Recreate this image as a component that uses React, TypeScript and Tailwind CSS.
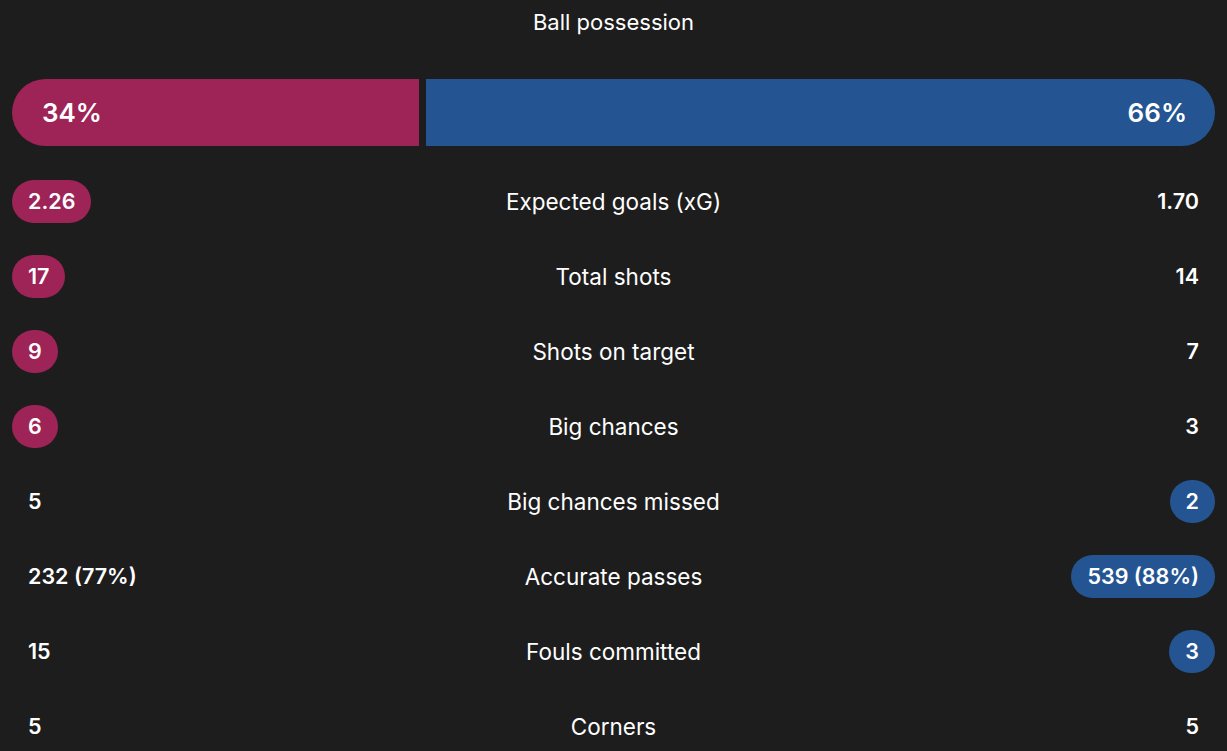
import React from 'react';

type Side = 'home' | 'away' | null;

interface StatRow {
  label: string;
  home: string;
  away: string;
  highlight: Side;
}

const stats: StatRow[] = [
  { label: 'Expected goals (xG)', home: '2.26', away: '1.70', highlight: 'home' },
  { label: 'Total shots', home: '17', away: '14', highlight: 'home' },
  { label: 'Shots on target', home: '9', away: '7', highlight: 'home' },
  { label: 'Big chances', home: '6', away: '3', highlight: 'home' },
  { label: 'Big chances missed', home: '5', away: '2', highlight: 'away' },
  { label: 'Accurate passes', home: '232 (77%)', away: '539 (88%)', highlight: 'away' },
  { label: 'Fouls committed', home: '15', away: '3', highlight: 'away' },
  { label: 'Corners', home: '5', away: '5', highlight: null },
];

const Value = ({ value, active, side }: { value: string; active: boolean; side: 'home' | 'away' }) => {
  const bg = side === 'home' ? 'bg-[#9e2356]' : 'bg-[#245592]';
  return (
    <span
      className={`inline-flex h-[43px] min-w-[43px] items-center justify-center rounded-full px-[16px] text-[21.5px] font-semibold text-white ${
        active ? bg : ''
      }`}
    >
      {value}
    </span>
  );
};

export default function App() {
  const home = 34;
  return (
    <div className="min-h-[751px] w-full bg-[#1d1d1d] px-[12px] text-white" style={{ fontFamily: 'Inter, "Noto Sans", sans-serif' }}>
      <div className="flex h-[44px] items-center justify-center text-[22px]">Ball possession</div>

      <div className="mt-[35px] flex h-[67px] gap-[7px]">
        <div
          className="flex items-center rounded-l-full bg-[#9e2356] pl-[30px] text-[26px] font-semibold"
          style={{ width: `calc((100% - 7px) * ${home / 100})` }}
        >
          {home}%
        </div>
        <div className="flex flex-1 items-center justify-end rounded-r-full bg-[#245592] pr-[28px] text-[26px] font-semibold">
          {100 - home}%
        </div>
      </div>

      <div className="mt-[18px]">
        {stats.map(s => (
          <div key={s.label} className="grid h-[75px] grid-cols-[1fr_auto_1fr] items-center">
            <div className="flex justify-start">
              <Value value={s.home} active={s.highlight === 'home'} side="home" />
            </div>
            <div className="text-center text-[22.5px]">{s.label}</div>
            <div className="flex justify-end">
              <Value value={s.away} active={s.highlight === 'away'} side="away" />
            </div>
          </div>
        ))}
      </div>
    </div>
  );
}
